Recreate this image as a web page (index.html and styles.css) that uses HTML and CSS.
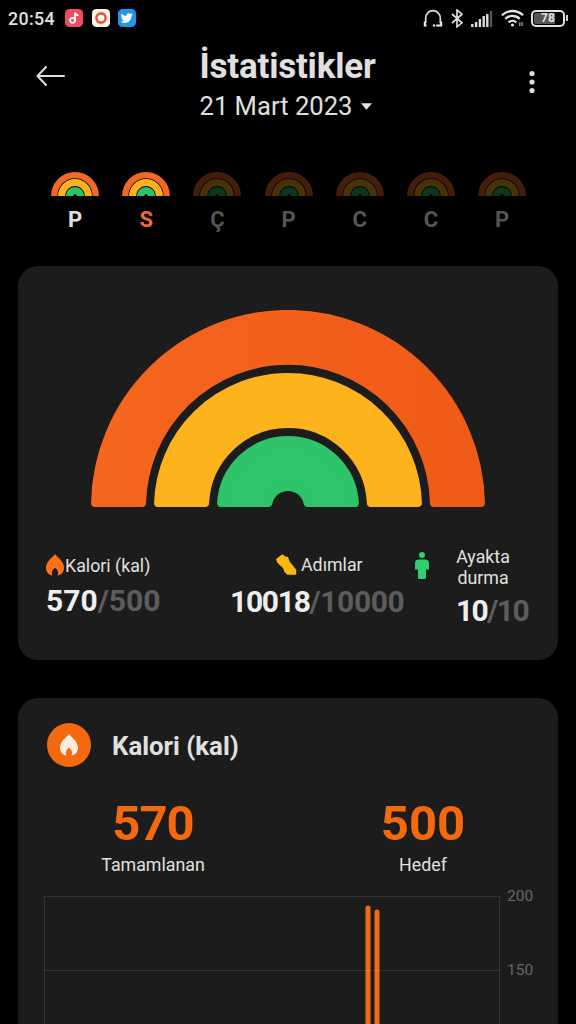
FILE: index.html
```
<!DOCTYPE html>
<html lang="tr">
<head>
<meta charset="UTF-8">
<meta name="viewport" content="width=device-width,initial-scale=1">
<title>İstatistikler</title>
<link rel="stylesheet" href="styles.css">
</head>
<body>

<svg class="defs" width="0" height="0">
  <symbol id="mini" viewBox="0 0 48 24">
    <g fill="none">
      <circle cx="24" cy="24" r="20.8" stroke="#f06a22" stroke-width="6.2"/>
      <circle cx="24" cy="24" r="13.4" stroke="#fbb120" stroke-width="7"/>
      <circle cx="24" cy="24" r="5.4" stroke="#2fc168" stroke-width="7.4"/>
    </g>
  </symbol>
  <symbol id="flame" viewBox="0 0 18 22">
    <path d="M9 0C11 3 18 7.500 18 13.400C18 17.500 15.500 21 11.500 21.600C13 19 12 16 9 13.800C6 16 5 19 6.500 21.600C2.500 21 0 17.500 0 13.400C0 7.500 7 3 9 0Z" fill="currentColor"/>
  </symbol>
</svg>

<!-- status bar -->
<div class="status">
  <span class="clock">20:54</span>
  <svg class="app" viewBox="0 0 18 18"><rect width="18" height="18" rx="4.5" fill="#f04b60"/><circle cx="7.6" cy="11.3" r="2.5" fill="none" stroke="#fff" stroke-width="1.8"/><path d="M10 11.3V3.5C10.3 5.3 11.5 6.3 13.4 6.4" fill="none" stroke="#fff" stroke-width="1.8"/></svg>
  <svg class="app" viewBox="0 0 18 18"><rect width="18" height="18" rx="4.5" fill="#fff5ec"/><circle cx="9" cy="9" r="4.600" fill="#fff" stroke="#e35a38" stroke-width="2.600"/></svg>
  <svg class="app" viewBox="0 0 18 18"><rect width="18" height="18" rx="4.5" fill="#2196e8"/><path d="M14.2 5.6l-1.2.3.9-1.2-1.4.5a2.4 2.4 0 0 0-4 2.1C6.500 7.200 5 6.400 3.800 5a2.400 2.400 0 0 0 .8 3.100l-1-.3c0 1.200.8 2 1.900 2.300l-1 .1c.3.900 1.100 1.500 2.200 1.600-1 .7-2.100 1-3.300.9 4.400 2.500 9.700-.2 9.700-5.800z" fill="#fff" stroke="#fff" stroke-width=".6"/></svg>
  <div class="signals">
    <svg width="20" height="19" viewBox="0 0 20 19"><path d="M2.700 14V9a7.200 7.200 0 0 1 14.600 0v5" fill="none" stroke="#ddd" stroke-width="1.700"/><path d="M1.800 12.500v4h1.800M18.200 12.500v4h-5" fill="none" stroke="#eee" stroke-width="2"/><circle cx="11" cy="16.500" r="1.200" fill="#eee"/></svg>
    <svg class="bt" width="12" height="19" viewBox="0 0 12 19"><path d="M1 5l10 8.800-5 4V1l5 4.200L1 14" fill="none" stroke="#ddd" stroke-width="1.700"/></svg>
    <svg class="bars" width="23" height="17" viewBox="0 0 23 17"><path d="M2.300 17v-3M6.100 17v-5M9.900 17V9M13.700 17V6M17.300 17V4" stroke="#ddd" stroke-width="2.400"/><path d="M21 17V1" stroke="#555" stroke-width="2.400"/></svg>
    <svg class="wifi" width="24" height="18" viewBox="0 0 24 18"><g fill="none" stroke="#e4e4e4" stroke-width="2.300"><path d="M1 6.300a15 15 0 0 1 21 0M4.300 9.900a10.300 10.300 0 0 1 14.400 0M7.700 13.300a5.500 5.500 0 0 1 7.600 0"/></g><circle cx="11.500" cy="16" r="1.600" fill="#e4e4e4"/><path d="M18.700 13v4m2.300 0v-4" stroke="#888" stroke-width="1.500"/></svg>
    <span class="battery"><span>78</span></span>
  </div>
</div>

<!-- header -->
<header>
  <svg class="back" width="30" height="20" viewBox="0 0 30 20"><path d="M28 10H2M10 1L1.500 10L10 19" fill="none" stroke="#ddd" stroke-width="2" stroke-linecap="round" stroke-linejoin="round"/></svg>
  <div class="heading">
    <h1>İstatistikler</h1>
    <p class="date">21 Mart 2023 <svg width="11" height="7" viewBox="0 0 10 6"><path d="M0 0h10L5 6z" fill="#e4e4e4"/></svg></p>
  </div>
  <svg class="more" width="6" height="24" viewBox="0 0 6 24"><g fill="#ddd"><circle cx="3" cy="3.500" r="2.600"/><circle cx="3" cy="12" r="2.600"/><circle cx="3" cy="20.500" r="2.600"/></g></svg>
</header>

<!-- week -->
<div class="week">
  <div class="day"><svg><use href="#mini"/></svg>P</div>
  <div class="day today"><svg><use href="#mini"/></svg>S</div>
  <div class="day off"><svg><use href="#mini"/></svg>Ç</div>
  <div class="day off"><svg><use href="#mini"/></svg>P</div>
  <div class="day off"><svg><use href="#mini"/></svg>C</div>
  <div class="day off"><svg><use href="#mini"/></svg>C</div>
  <div class="day off"><svg><use href="#mini"/></svg>P</div>
</div>

<!-- daily goals -->
<section class="card goals">
  <svg class="rainbow" viewBox="0 0 394 197">
    <defs><linearGradient id="cal"><stop offset="0" stop-color="#f5661e"/><stop offset="1" stop-color="#f05a18"/></linearGradient></defs>
    <g stroke-width="8" stroke-linejoin="round">
      <path fill="url(#cal)" stroke="url(#cal)" d="M4.040 193A193 193 0 0 1 389.960 193H342.950A146 146 0 0 0 51.050 193Z"/>
      <path fill="#fdb31b" stroke="#fdb31b" d="M67.060 193A130 130 0 0 1 326.940 193H279.900A83 83 0 0 0 114.100 193Z"/>
      <path fill="#2fc36a" stroke="#2fc36a" d="M130.120 193A67 67 0 0 1 263.880 193H216.600A20 20 0 0 0 177.400 193Z"/>
    </g>
  </svg>
  <div class="stats">
    <div class="stat kcal">
      <p class="label"><svg class="flame"><use href="#flame"/></svg>Kalori (kal)</p>
      <p class="value">570<span>/500</span></p>
    </div>
    <div class="stat steps">
      <p class="label"><svg width="21" height="21" viewBox="0 0 21 21"><path d="M.8 5.200L6.500 1L8.500 3L11.500 3.500L13 8L19.500 16V20H11.500L9 17.500L7.500 13.500L2 8.500Z" fill="#fcb90d" stroke="#fcb90d" stroke-width="1.400" stroke-linejoin="round"/></svg>Adımlar</p>
      <p class="value">10018<span>/10000</span></p>
    </div>
    <div class="stat stand">
      <svg width="14" height="27" viewBox="0 0 14 27"><circle cx="7" cy="3" r="3" fill="#2fd06f"/><path d="M4 7.500h6a4 4 0 0 1 4 4V17.500h-3v8a1.500 1.500 0 0 1-1.500 1.500h-5A1.500 1.500 0 0 1 3 25.500V17.500H0v-6a4 4 0 0 1 4-4z" fill="#2fd06f"/></svg>
      <div>
        <p class="label">Ayakta<br>durma</p>
        <p class="value">10<span>/10</span></p>
      </div>
    </div>
  </div>
</section>

<!-- calories -->
<section class="card calories">
  <div class="title">
    <span class="badge"><svg><use href="#flame"/></svg></span>
    <h2>Kalori (kal)</h2>
  </div>
  <div class="totals">
    <div><strong>570</strong><p>Tamamlanan</p></div>
    <div><strong>500</strong><p>Hedef</p></div>
  </div>
  <div class="chart">
    <svg width="456" height="128" viewBox="0 0 456 128">
      <path d="M324 12v120M333 16v120" stroke="#ed6b16" stroke-width="5" stroke-linecap="round"/>
      <path d="M.5 128V.5h455V128M0 74.500h456" fill="none" stroke="#fff" stroke-opacity=".1"/>
    </svg>
    <div class="scale"><span>200</span><span>150</span></div>
  </div>
</section>

</body>
</html>
```
FILE: styles.css
```
*{box-sizing:border-box;margin:0;padding:0}
body{background:#000;color:#e0e0e0;font-family:Roboto,"Noto Sans",sans-serif}
svg{display:block;flex:none}
.defs{display:none}

.status{display:flex;align-items:center;height:36px;padding:0 8px}
.clock{width:57px;font-size:17.8px;font-weight:500;letter-spacing:.4px}
.app{width:18px;height:18px;margin-right:8.700px}
.signals{display:flex;align-items:center;margin-left:auto}
.bt{margin-left:8px}
.bars{margin:0 8px 0 7px}
.wifi{margin-right:6px}
.battery{display:flex;align-items:center}
.battery span{width:34px;height:17px;border:2px solid #e0e0e0;border-radius:5px;
              background:linear-gradient(90deg,#555 75%,#000 75%);background-clip:content-box;padding:1px;
              font-size:12px;line-height:11px;font-weight:700;text-align:center}
.battery::after{content:"";width:2px;height:6px;margin-left:1px;background:#ccc}

header{display:flex;align-items:flex-start;height:136px;padding:0 41px 0 36px}
.back{margin-top:30px}
.heading{width:200px;margin:8px auto 0 133.500px}
h1{font-size:35px;line-height:46px;font-weight:700;letter-spacing:-.2px;white-space:nowrap}
.date{display:flex;align-items:center;gap:9px;font-size:25.6px;line-height:32px;white-space:nowrap}
.more{margin-top:34px}

.week{display:flex;gap:23.200px;height:94px;padding-left:51px}
.day{width:48px;text-align:center;font-size:22px;line-height:26px;font-weight:700}
.day svg{width:48px;height:24px;margin-bottom:11px}
.today{color:#ee6c35}
.off{color:#555}
.off svg{opacity:.28}

.card{width:540px;margin:0 auto;border-radius:20px;background:#1c1c1c}
.goals{height:394px;padding-top:44px}
.rainbow{width:394px;height:197px;margin:0 auto 39px}
.stats{display:flex;padding-left:28px}
.label{display:flex;align-items:center;font-size:17.8px;line-height:21px;white-space:nowrap}
.value{font-size:30px;line-height:36px;font-weight:700;white-space:nowrap;color:#eee}
.value span{color:#5c5c5c}
.kcal{width:184px;padding-top:8px}
.kcal .value{margin-top:7px}
.flame{width:18px;height:22px;margin-right:1px;color:#ff7019}
.steps{width:183px;padding-top:8px}
.steps .label{gap:4px;padding-left:46px}
.steps .value{margin-top:9px;letter-spacing:-1.300px}
.steps .value span{letter-spacing:-.400px}
.stand{display:flex;gap:27px}
.stand>svg{margin-top:6px;margin-left:2px}
.stand .label{display:block;width:54px;text-align:center}
.stand .value{margin-top:5px;letter-spacing:-1.600px}

.calories{height:326px;margin-top:38px;padding-top:25px;overflow:hidden;border-radius:20px 20px 0 0}
.title{display:flex;align-items:center;gap:21px;padding-left:29px}
.badge{display:flex;align-items:center;justify-content:center;width:44px;height:44px;border-radius:50%;background:#f4690e}
.badge svg{width:18px;height:22px;color:#fdebdd}
h2{padding-top:2px;font-size:25.8px;line-height:42px;font-weight:700}
.totals{display:flex;margin-top:27px}
.totals div{width:270px;text-align:center}
.totals strong{display:block;padding-top:1px;font-size:49px;line-height:57px;color:#f4690e}
.totals div:first-child strong{letter-spacing:-1px}
.totals p{font-size:17.8px;line-height:26px}
.chart{display:flex;gap:7px;height:128px;margin-top:18px;padding-left:26px}
.scale span{display:block;height:74px;margin-top:-9px;margin-bottom:9px;font-size:15.5px;line-height:18px;color:#666}
.scale span:last-child{height:60px;margin-bottom:0}
```
